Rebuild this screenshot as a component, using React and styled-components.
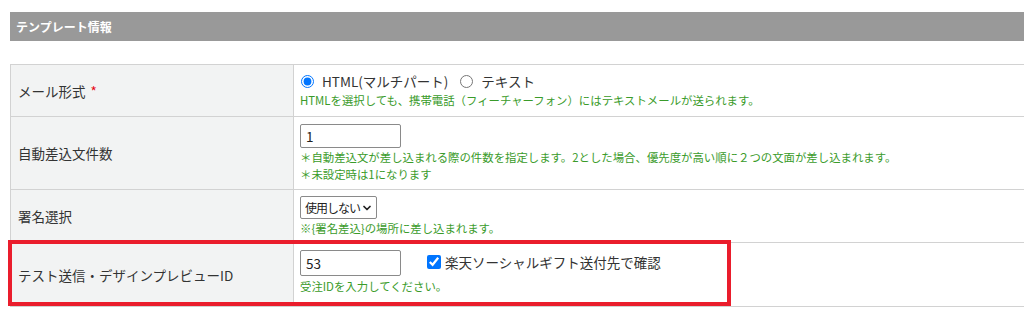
import React from 'react';
import styled, { createGlobalStyle } from 'styled-components';
import { ChevronDown } from 'lucide-react';

const GlobalStyle = createGlobalStyle`
  body {
    margin: 0;
    background: #fff;
    font-family: "Noto Sans CJK JP", "Noto Sans", sans-serif;
    color: #333;
  }
`;

const Page = styled.div`
  padding: 12px 0 0 10px;
`;

const SectionHeader = styled.h2`
  margin: 0;
  height: 29px;
  display: flex;
  align-items: center;
  padding-left: 6px;
  background: #999999;
  color: #fff;
  font-size: 12px;
  font-weight: bold;
`;

const TableWrap = styled.div`
  position: relative;
  margin-top: 23px;
`;

const FormTable = styled.table`
  width: 100%;
  border-collapse: collapse;
  border-top: 1px solid #d2d2d2;
`;

const Row = styled.tr`
  height: ${(p) => p.$h}px;
  border-bottom: 1px solid #d2d2d2;
`;

const Label = styled.th`
  width: 275px;
  padding: 0 0 0 7px;
  background: #f2f3f3;
  border-right: 1px solid #d2d2d2;
  border-left: 1px solid #d2d2d2;
  text-align: left;
  font-weight: normal;
  font-size: 13.5px;
  color: #333;
  vertical-align: middle;
`;

const Required = styled.span`
  color: #e60012;
  margin-left: 5px;
`;

const Field = styled.td`
  padding: ${(p) => p.$pt}px 6px 0 6px;
  vertical-align: top;
  font-size: 13.5px;
`;

const Line = styled.div`
  display: flex;
  align-items: center;
  height: ${(p) => p.$h || 18}px;
`;

const Choice = styled.label`
  display: inline-flex;
  align-items: center;
  margin-right: 11px;
  font-size: 13.5px;
  color: #333;

  input {
    margin: 0 8px 0 1px;
    width: 13px;
    height: 13px;
  }
`;

const CheckChoice = styled.label`
  display: inline-flex;
  align-items: center;
  margin-left: 25px;
  font-size: 13.5px;
  color: #333;
  align-self: flex-start;
  margin-top: 2px;

  input {
    margin: 0 4px 0 1px;
    width: 14px;
    height: 14px;
  }
`;

const Note = styled.div`
  color: #3a9b2a;
  font-size: 11.4px;
  line-height: ${(p) => p.$lh || 16}px;
  margin-top: ${(p) => p.$mt || 0}px;
  white-space: nowrap;
`;

const TextInput = styled.input`
  box-sizing: border-box;
  width: 101px;
  height: ${(p) => p.$h || 25}px;
  margin: 0;
  padding: 0 5px;
  border: 1px solid #8a8a8a;
  border-radius: 2px;
  font-family: inherit;
  font-size: 13.5px;
  color: #222;
`;

const SelectWrap = styled.div`
  position: relative;
  display: inline-block;
  width: 77px;
  height: 23px;

  svg {
    position: absolute;
    right: 4px;
    top: 6px;
    pointer-events: none;
  }
`;

const Select = styled.select`
  box-sizing: border-box;
  appearance: none;
  width: 100%;
  height: 100%;
  margin: 0;
  padding: 0 12px 0 4px;
  border: 1px solid #8a8a8a;
  border-radius: 2px;
  background: #fff;
  font-family: inherit;
  font-size: 12px;
  letter-spacing: -1px;
  color: #222;
`;

const Highlight = styled.div`
  position: absolute;
  left: -2px;
  top: 176px;
  width: 723px;
  height: 66px;
  box-sizing: border-box;
  border: 4px solid #ea1d2c;
  pointer-events: none;
`;

const App = () => {
  return (
    <Page>
      <GlobalStyle />
      <SectionHeader>テンプレート情報</SectionHeader>
      <TableWrap>
        <FormTable>
          <tbody>
            <Row $h={52}>
              <Label>
                メール形式<Required>*</Required>
              </Label>
              <Field $pt={7}>
                <Line>
                  <Choice>
                    <input type="radio" name="format" defaultChecked />
                    HTML(マルチパート)
                  </Choice>
                  <Choice>
                    <input type="radio" name="format" />
                    テキスト
                  </Choice>
                </Line>
                <Note $mt={2}>
                  HTMLを選択しても、携帯電話（フィーチャーフォン）にはテキストメールが送られます。
                </Note>
              </Field>
            </Row>
            <Row $h={73}>
              <Label>自動差込文件数</Label>
              <Field $pt={7}>
                <TextInput type="text" defaultValue="1" $h={24} />
                <Note $lh={17} $mt={1}>
                  ＊自動差込文が差し込まれる際の件数を指定します。2とした場合、優先度が高い順に２つの文面が差し込まれます。
                </Note>
                <Note $lh={17}>＊未設定時は1になります</Note>
              </Field>
            </Row>
            <Row $h={53}>
              <Label>署名選択</Label>
              <Field $pt={6}>
                <SelectWrap>
                  <Select defaultValue="none">
                    <option value="none">使用しない</option>
                  </Select>
                  <ChevronDown size={12} strokeWidth={3.5} color="#222" />
                </SelectWrap>
                <Note $mt={1}>※{'{'}署名差込{'}'}の場所に差し込まれます。</Note>
              </Field>
            </Row>
            <Row $h={64}>
              <Label>テスト送信・デザインプレビューID</Label>
              <Field $pt={7}>
                <Line $h={26}>
                  <TextInput type="text" defaultValue="53" $h={26} />
                  <CheckChoice>
                    <input type="checkbox" defaultChecked />
                    楽天ソーシャルギフト送付先で確認
                  </CheckChoice>
                </Line>
                <Note $mt={2}>受注IDを入力してください。</Note>
              </Field>
            </Row>
          </tbody>
        </FormTable>
        <Highlight />
      </TableWrap>
    </Page>
  );
};

export default App;
